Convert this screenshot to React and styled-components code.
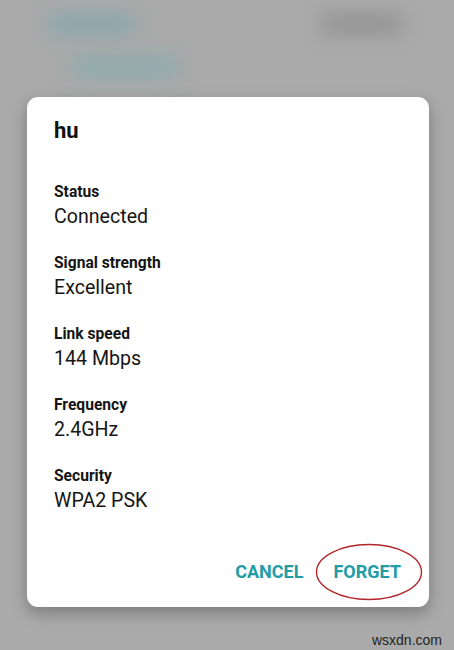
import React from "react";
import styled, { createGlobalStyle } from "styled-components";

const GlobalStyle = createGlobalStyle`
  html, body {
    margin: 0;
    padding: 0;
    background: #aaaaaa;
    font-family: Roboto, "Liberation Sans", sans-serif;
  }
`;

const Screen = styled.div`
  position: relative;
  width: 454px;
  height: 650px;
  overflow: hidden;
  background: #aaaaaa;
`;

const BackdropList = styled.div`
  display: flex;
  flex-direction: column;
  gap: 20px;
  padding: 12px 0 0 48px;
`;

const BackdropRow = styled.div`
  display: flex;
  justify-content: space-between;
  align-items: center;
  padding-left: ${({ $indent }) => $indent || 0}px;
  padding-right: 50px;
`;

const Blob = styled.div`
  width: ${({ $w }) => $w}px;
  height: ${({ $h }) => $h}px;
  border-radius: 12px;
  background: ${({ $c }) => $c};
  filter: blur(9px);
`;

const Dialog = styled.div`
  position: absolute;
  left: 27px;
  top: 97px;
  width: 402px;
  height: 510px;
  box-sizing: border-box;
  background: #ffffff;
  border-radius: 11px;
  box-shadow: 0 6px 16px rgba(0, 0, 0, 0.28);
  padding: 20px 28px 0 27px;
  display: flex;
  flex-direction: column;
`;

const Title = styled.div`
  font-size: 22px;
  font-weight: 700;
  line-height: 28px;
  color: #111;
  margin-bottom: 37px;
`;

const Field = styled.div`
  display: flex;
  flex-direction: column;
  margin-bottom: 21px;
`;

const Label = styled.div`
  font-size: 15.6px;
  font-weight: 700;
  line-height: 20px;
  color: #151515;
`;

const Value = styled.div`
  font-size: 19.6px;
  line-height: 30px;
  color: #151515;
`;

const Actions = styled.div`
  margin-top: auto;
  margin-bottom: 23px;
  display: flex;
  justify-content: flex-end;
  gap: 30px;
`;

const ActionButton = styled.button`
  position: relative;
  border: none;
  background: none;
  padding: 0;
  font-family: Roboto, "Liberation Sans", sans-serif;
  font-size: 18px;
  font-weight: 700;
  line-height: 24px;
  color: #239ca6;
`;

const Circle = styled.svg`
  position: absolute;
  left: -18px;
  top: -17px;
  pointer-events: none;
`;

const Watermark = styled.div`
  position: absolute;
  right: 12px;
  bottom: 2px;
  font-family: "Liberation Sans", Arial, sans-serif;
  font-size: 14px;
  color: #1f1f1f;
`;

const fields = [
  ["Status", "Connected"],
  ["Signal strength", "Excellent"],
  ["Link speed", "144 Mbps"],
  ["Frequency", "2.4GHz"],
  ["Security", "WPA2 PSK"],
];

export default function App() {
  return (
    <Screen>
      <GlobalStyle />
      <BackdropList>
        <BackdropRow>
          <Blob $w={88} $h={22} $c="#8aa8ab" />
          <Blob $w={85} $h={24} $c="#969696" />
        </BackdropRow>
        <BackdropRow $indent={22}>
          <Blob $w={110} $h={22} $c="#90abad" />
        </BackdropRow>
      </BackdropList>

      <Dialog>
        <Title>hu</Title>
        {fields.map(([label, value]) => (
          <Field key={label}>
            <Label>{label}</Label>
            <Value>{value}</Value>
          </Field>
        ))}
        <Actions>
          <ActionButton>CANCEL</ActionButton>
          <ActionButton>
            FORGET
            <Circle width="108" height="58" viewBox="0 0 108 58">
              <ellipse cx="54" cy="29" rx="52.5" ry="27.5" fill="none" stroke="#b3262c" strokeWidth="1.4" />
            </Circle>
          </ActionButton>
        </Actions>
      </Dialog>

      <Watermark>wsxdn.com</Watermark>
    </Screen>
  );
}
